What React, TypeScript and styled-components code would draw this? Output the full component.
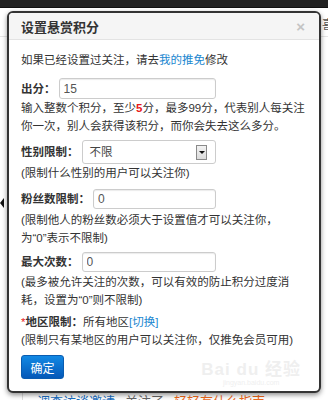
import React, { ReactNode } from 'react';
import styled, { createGlobalStyle } from 'styled-components';

const GlobalStyle = createGlobalStyle`
    html, body {
        margin: 0;
        padding: 0;
        background: #fff;
        overflow: hidden;
    }
    body {
        font-family: "Liberation Sans", "Noto Sans CJK SC", sans-serif;
        color: #333;
    }
`;

const Page = styled.div`
    width: 328px;
    height: 400px;
    overflow: hidden;
    background: #fff;
`;

const TopBar = styled.div`
    height: 8px;
    background: #222;
    border-bottom: 1px solid #111;
    box-sizing: border-box;
`;

const Stage = styled.div`
    position: relative;
    padding: 3px 0 0 7px;
    background: linear-gradient(#fff 28px, #e6e6e6 28px, #e6e6e6 29px, #fff 29px);
`;

const SideGlyph = styled.span`
    position: absolute;
    right: -6px;
    top: 7px;
    font-size: 12px;
    color: #555;
`;

const LeftArrow = styled.span`
    position: absolute;
    left: 0;
    top: 190px;
    width: 0;
    height: 0;
    border-top: 5px solid transparent;
    border-bottom: 5px solid transparent;
    border-right: 4px solid #111;
`;

const Modal = styled.div`
    position: relative;
    width: 314px;
    box-sizing: border-box;
    border: 2px solid #333;
    border-radius: 6px;
    background: #fff;
    box-shadow: 0 2px 5px rgba(0, 0, 0, 0.45);
    overflow: hidden;
`;

const Header = styled.div`
    height: 26px;
    display: flex;
    align-items: center;
    justify-content: space-between;
    padding: 0 14px 0 12px;
    background: #f5f5f5;
    border-bottom: 1px solid #e3e3e3;
`;

const Title = styled.h3`
    margin: 0;
    font-size: 13px;
    font-weight: bold;
    color: #333;
`;

const Close = styled.span`
    font-size: 15px;
    font-weight: bold;
    color: #c4c4c4;
    line-height: 1;
`;

const Body = styled.div`
    position: relative;
    padding: 11px 12px 12px;
    font-size: 11.5px;
    line-height: 18px;
`;

const Line = styled.div<{ $gap?: number }>`
    margin-top: ${(p) => p.$gap || 0}px;
    white-space: nowrap;
`;

const Link = styled.a`
    color: #1b87d0;
    text-decoration: none;
`;

const Red = styled.span<{ $bold?: boolean }>`
    color: #e8191a;
    font-weight: ${(p) => (p.$bold ? 'bold' : 'normal')};
`;

const FieldRow = styled.div<{ $gap: number; $height: number }>`
    display: flex;
    align-items: center;
    width: 195px;
    height: ${(p) => p.$height}px;
    margin-top: ${(p) => p.$gap}px;
`;

const Label = styled.span<{ $inline?: boolean }>`
    font-weight: bold;
    white-space: nowrap;
    margin-right: ${(p) => (p.$inline ? 0 : 3)}px;
`;

const Input = styled.input`
    flex: 1;
    min-width: 0;
    height: 100%;
    box-sizing: border-box;
    border: 1px solid #ccc;
    border-radius: 3px;
    box-shadow: inset 0 1px 1px rgba(0, 0, 0, 0.08);
    padding: 0 4px;
    font-family: "Liberation Sans", sans-serif;
    font-size: 12px;
    color: #555;
    outline: none;
`;

const Select = styled.div`
    flex: 1;
    height: 100%;
    box-sizing: border-box;
    display: flex;
    align-items: center;
    justify-content: space-between;
    border: 1px solid #ccc;
    border-radius: 3px;
    padding: 0 8px 0 7px;
    color: #444;
`;

const SelectArrow = styled.span`
    width: 11px;
    height: 15px;
    box-sizing: border-box;
    display: flex;
    align-items: center;
    justify-content: center;
    background: linear-gradient(#f2f2f2, #dcdcdc);
    border: 1px solid #8a8a8a;

    &::after {
        content: '';
        border-left: 3px solid transparent;
        border-right: 3px solid transparent;
        border-top: 3px solid #111;
    }
`;

const Button = styled.button`
    margin-top: 6px;
    width: 43px;
    height: 24px;
    border: 1px solid #0a5cb0;
    border-radius: 3px;
    background: linear-gradient(#1289e4, #0558b8);
    color: #fff;
    font-family: "Liberation Sans", "Noto Sans CJK SC", sans-serif;
    font-size: 12px;
    padding: 0;
    display: block;
`;

const Watermark = styled.div`
    position: absolute;
    right: 18px;
    bottom: 4px;
    text-align: center;
    color: #efefef;
    pointer-events: none;
`;

const WatermarkLogo = styled.div`
    font-family: "Liberation Sans", "Noto Sans CJK SC", sans-serif;
    font-size: 17px;
    font-weight: bold;
    line-height: 18px;
    letter-spacing: 1px;
`;

const WatermarkUrl = styled.div`
    font-size: 7px;
    line-height: 8px;
`;

const BelowRow = styled.div`
    display: flex;
    gap: 10px;
    margin-left: 22px;
    padding: 1px 0 0 14px;
    border-left: 1px solid #ddd;
    font-size: 13px;
    line-height: 16px;
    white-space: nowrap;
`;

const BelowLink = styled.span<{ $color: string }>`
    color: ${(p) => p.$color};
`;

const Help = ({ children, gap }: { children: ReactNode; gap?: number }) => (
    <Line $gap={gap}>{children}</Line>
);

function App() {
    return (
        <Page>
            <GlobalStyle />
            <TopBar />
            <Stage>
                <SideGlyph>喜</SideGlyph>
                <LeftArrow />
                <Modal>
                    <Header>
                        <Title>设置悬赏积分</Title>
                        <Close>×</Close>
                    </Header>
                    <Body>
                        <Line>
                            如果已经设置过关注，请去<Link>我的推免</Link>修改
                        </Line>

                        <FieldRow $gap={9} $height={21}>
                            <Label>出分：</Label>
                            <Input defaultValue="15" />
                        </FieldRow>
                        <Help>
                            输入整数个积分，至少<Red $bold>5</Red>分，最多99分，代表别人每关注
                            <br />
                            你一次，别人会获得该积分，而你会失去这么多分。
                        </Help>

                        <FieldRow $gap={5} $height={24}>
                            <Label>性别限制：</Label>
                            <Select>
                                <span>不限</span>
                                <SelectArrow />
                            </Select>
                        </FieldRow>
                        <Help>(限制什么性别的用户可以关注你)</Help>

                        <FieldRow $gap={7} $height={20}>
                            <Label>粉丝数限制：</Label>
                            <Input defaultValue="0" />
                        </FieldRow>
                        <Help gap={2}>
                            (限制他人的粉丝数必须大于设置值才可以关注你，
                            <br />
                            为“0”表示不限制)
                        </Help>

                        <FieldRow $gap={5} $height={20}>
                            <Label>最大次数：</Label>
                            <Input defaultValue="0" />
                        </FieldRow>
                        <Help gap={1}>
                            (最多被允许关注的次数，可以有效的防止积分过度消
                            <br />
                            耗，设置为“0”则不限制)
                        </Help>

                        <Line $gap={4}>
                            <Red>*</Red>
                            <Label $inline>地区限制：</Label>所有地区<Link>[切换]</Link>
                        </Line>
                        <Help>(限制只有某地区的用户可以关注你，仅推免会员可用)</Help>

                        <Button>确定</Button>

                        <Watermark>
                            <WatermarkLogo>Bai du 经验</WatermarkLogo>
                            <WatermarkUrl>jingyan.baidu.com</WatermarkUrl>
                        </Watermark>
                    </Body>
                </Modal>
            </Stage>
            <BelowRow>
                <BelowLink $color="#1b6fc2">调查访谈邀请</BelowLink>
                <BelowLink $color="#666">关注了</BelowLink>
                <BelowLink $color="#f06a1a">轻轻有什么指南</BelowLink>
            </BelowRow>
        </Page>
    );
}

export default App;
